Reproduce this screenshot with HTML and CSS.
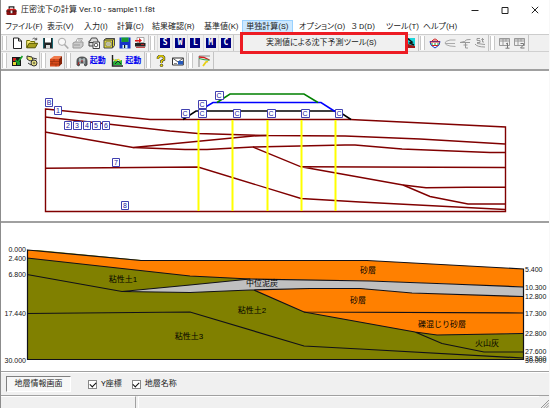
FILE: index.html
```html
<!DOCTYPE html>
<html lang="ja">
<head>
<meta charset="utf-8">
<title>圧密沈下の計算 Ver.10 - sample11.f8t</title>
<link rel="stylesheet" href="styles.css">
</head>
<body>
<div class="window">
  <header class="titlebar">
    <svg class="app-icon" viewBox="0 0 12 12"><path d="M3.5 4V2h5v2" fill="none" stroke="#222" stroke-width="1.4"/><path d="M1 5l2-1h6l2 1v3H1z" fill="#d01818"/><path d="M.5 7h11v3l-1 1h-9l-1-1z" fill="#8c1010"/><path d="M0 6.5h12M4 8h4" stroke="#211" stroke-width="1.2"/><path d="M5 6h2v3H5z" fill="#eee"/></svg>
    <h1 class="title">圧密沈下の計算 Ver.10 - sample11.f8t</h1>
    <div class="window-buttons">
      <button aria-label="最小化"><svg viewBox="0 0 8 8"><path d="M.5 4.5h7" stroke="#222"/></svg></button>
      <button aria-label="最大化"><svg viewBox="0 0 8 8"><path d="M1 1.5h6v6H1z" fill="none" stroke="#222"/></svg></button>
      <button aria-label="閉じる"><svg viewBox="0 0 8 8"><path d="M.8.8l6.4 6.4M7.2.8L.8 7.2" stroke="#222"/></svg></button>
    </div>
  </header>

  <nav class="menubar">
    <button>ファイル(F)</button>
    <button>表示(V)</button>
    <button>入力(I)</button>
    <button>計算(C)</button>
    <button>結果確認(R)</button>
    <button>基準値(K)</button>
    <div class="menu-open">
      <button class="active">単独計算(S)</button>
      <div class="dropdown"><button>実測値による沈下予測ツール(S)</button></div>
    </div>
    <button>オプション(O)</button>
    <button>３ D(D)</button>
    <button>ツール(T)</button>
    <button>ヘルプ(H)</button>
  </nav>

  <div class="toolbars">
    <div class="toolbar">
      <i class="grip"></i>
      <div class="group files">
        <button aria-label="新規"><svg viewBox="0 0 12 12"><path d="M2.5 1h5l3 3v7.5h-8z" fill="#fff" stroke="#222"/><path d="M7.5 1v3h3" fill="none" stroke="#222"/></svg></button>
        <button aria-label="開く"><svg viewBox="0 0 12 12"><path d="M.7 10.5v-7h3l1 1h4v2" fill="#fff17a" stroke="#6c6c00"/><path d="M.7 10.8l2.3-4.5h8.7l-2.5 4.5z" fill="#a8a020" stroke="#555500"/><path d="M6.5 2c1.5-1.3 3-1 3.8.5M10.7.8v2H8.5" fill="none" stroke="#333" stroke-width=".8"/></svg></button>
        <button aria-label="保存"><svg viewBox="0 0 12 12"><path d="M1 1h10v10.5H1z" fill="#222"/><path d="M3 1h6v4.5H3z" fill="#fff"/><path d="M1.7 1v10M10.4 1v10" stroke="#168494" stroke-width=".8"/><path d="M4 8h4v3.5H4z" fill="#ddd"/></svg></button>
        <button aria-label="検索"><svg viewBox="0 0 12 12"><circle cx="5" cy="4.8" r="3.6" fill="#f8f8f8" stroke="#aaa"/><path d="M7.5 7.5l3.8 4" stroke="#aaa" stroke-width="1.6"/></svg></button>
        <button aria-label="印刷"><svg viewBox="0 0 12 12"><path d="M3.5 5.500l2-4h5L8.500 5.500" fill="#fff" stroke="#aaa"/><path d="M1 6l2-1h8v4L8.500 11H1z" fill="#ccc" stroke="#999"/><path d="M2 8h6M6 3h3" stroke="#999"/></svg></button>
        <button aria-label="印刷プレビュー"><svg viewBox="0 0 12 12"><path d="M2 4l1.500-3h5L10 4v5H1V4z" fill="#ddd" stroke="#444"/><path d="M1 5.500h9" stroke="#444"/><path d="M5 5h6.500v6.500H5z" fill="#fff" stroke="#444"/><circle cx="8" cy="8" r="1.800" fill="none" stroke="#555"/></svg></button>
        <button aria-label="図面"><svg viewBox="0 0 12 12"><path d="M1 3l2-1.500h8.500v7L9.500 11H1z" fill="#e4dc38" stroke="#444"/><path d="M1 3h8.500v8M9.500 3l2-1.500" fill="none" stroke="#444"/><path d="M3 5h5v4H3z" fill="#ffc" stroke="#555" stroke-width=".7"/><path d="M4 7h3" stroke="#777"/></svg></button>
        <button aria-label="FD保存"><svg viewBox="0 0 12 12"><path d="M.5.5h11v11H.5z" fill="#1735c8"/><path d="M2.5.5h7V5h-7z" fill="#2ed24a"/><path d="M3 2h6M3 4h6" stroke="#075f16"/><path d="M3.5 8h5v3.5h-5z" fill="#d0f4ff"/><path d="M5 8h1.2v3H5z" fill="#111"/></svg></button>
        <button aria-label="出力"><svg viewBox="0 0 12 12"><path d="M3 .5h7v5H3z" fill="#fff" stroke="#888" stroke-width=".7"/><path d="M1 3h4V1l3 2.500-3 2.500V4.500H1z" fill="#e01818"/><path d="M1 6h10.500v3.500H1z" fill="#222"/><path d="M2 10.300h9M7 7.500h3" stroke="#ba2222"/></svg></button>
      </div>
      <i class="grip"></i>
      <div class="group letters">
        <button><b>S</b></button><button><b>W</b></button><button><b>L</b></button><button><b>M</b></button><button><b>C</b></button>
      </div>
      <div class="group hidden-tools">
        <button aria-label="断面図"><svg viewBox="0 0 12 12"><path d="M1 1h10v10H1z" fill="#18d6dc"/><path d="M1 8l3-1 3 1 4 1v2H1z" fill="#a01818"/><path d="M3 1l5 4-2 1 4 2" fill="none" stroke="#111" stroke-width="1.6"/></svg></button>
      </div>
      <i class="grip"></i>
      <div class="group shapes">
        <button aria-label="土層"><svg viewBox="0 0 12 12"><path d="M3 4q3-4 6 0z" fill="#fff" stroke="#d02020"/><path d="M1 4.5h10L10 8l-4 3-4-3z" fill="#fff" stroke="#1b31c4"/><path d="M1 5h10M3 8.5h6" stroke="#d02020"/><path d="M2 7h8" stroke="#149b36" stroke-dasharray="2 1"/></svg></button>
        <button aria-label="曲線"><svg viewBox="0 0 12 12"><path d="M11.5 3H6Q1 4 1 6t5 3l5.5.5M1 6.5h10" fill="none" stroke="#aaa"/></svg></button>
        <button aria-label="時間曲線"><svg viewBox="0 0 12 12"><path d="M11.5 2.5Q7 2 5.5 4.5L1 5.5h10M6.5 6v5M4.5 8h4M6.5 11H9" fill="none" stroke="#999"/></svg></button>
        <button aria-label="沈下曲線"><svg viewBox="0 0 12 12"><path d="M6 1.5H3v2h3v2H3M8.5 1v4H10M7.3 2.5H10M1 7q2 3 10 3M3 6.5l8 1" fill="none" stroke="#999"/></svg></button>
      </div>
      <i class="grip"></i>
      <div class="group tables">
        <button aria-label="表1"><svg viewBox="0 0 12 12"><path d="M.5 1.5h10v7H.5zM.5 4h10M4 1.5v7M7 1.5v3" fill="none" stroke="#999"/><path d="M.5 1.5h10v1H.5z" fill="#999"/><path d="M7 7l1.5-1v5M6.5 11.2h4" fill="none" stroke="#777"/></svg></button>
        <button aria-label="表2"><svg viewBox="0 0 12 12"><path d="M.5 1.5h10v7H.5zM.5 4h10M4 1.5v7M7 1.5v3" fill="none" stroke="#999"/><path d="M.5 1.5h10v1H.5z" fill="#999"/><path d="M6.5 6.5h3V8l-3 3h4" fill="none" stroke="#777"/></svg></button>
      </div>
    </div>
    <div class="toolbar">
      <i class="grip"></i>
      <div class="group checks">
        <button aria-label="計算確認"><svg viewBox="0 0 12 12"><path d="M1 2h9v9H1z" fill="#181818"/><path d="M2 3h3v3H2z" fill="#d12020"/><path d="M6 7h3v3H6z" fill="#1d9a2d"/><path d="M2 7h3v3H2z" fill="#e6d533"/><path d="M4.5 5l2 2.5L11.5 1" fill="none" stroke="#18a12a" stroke-width="1.7"/></svg></button>
        <button aria-label="連動"><svg viewBox="0 0 12 12"><path d="M1 1l5 1 1 3-3 1-3-2z" fill="#e8e46a" stroke="#333"/><circle cx="8" cy="8" r="3" fill="#ddd67c" stroke="#333"/><path d="M2 8l3 2M7 3l4 1M7 8h2" stroke="#333"/></svg></button>
      </div>
      <i class="grip"></i>
      <div class="group single">
        <button aria-label="土質"><svg viewBox="0 0 12 12"><path d="M0 4l4-3h8L9 4z" fill="#ef7a4c"/><path d="M0 4h9v7.5H0z" fill="#d84a1c"/><path d="M9 4l3-3v7.5l-3 3z" fill="#842208"/><path d="M0 6.5h9l3-3M0 9h9l3-3M4 4v2.5M2 6.5V9M6 9v2.5" fill="none" stroke="#8e2b0c" stroke-width=".6"/></svg></button>
      </div>
      <i class="grip"></i>
      <div class="group launch">
        <button><svg viewBox="0 0 12 12"><path d="M1 10V6q0-4 5-4t5 4v4l-2 1-1-3H4l-1 3z" fill="#666d70" stroke="#333" stroke-width=".8"/><path d="M3 5h6M4 3v6M8 3v6" stroke="#c7d0d1"/><path d="M2 10l1-3M5 6h2" stroke="#a22"/></svg><span>起動</span></button>
        <button><svg viewBox="0 0 12 12"><path d="M2 7l3-3 2 2 4-1v5H2z" fill="#25b13a"/><path d="M2 4l3 2 2-2 3 2" fill="none" stroke="#e0cd10"/><path d="M4 9l3-3 3 3" fill="none" stroke="#222"/><path d="M1.500 0v11H12" fill="none" stroke="#222" stroke-width="1.400"/></svg><span>起動</span></button>
      </div>
      <i class="grip"></i>
      <div class="group help">
        <button aria-label="ヘルプ"><svg viewBox="0 0 12 12"><path d="M3 4V2.5L4.5 1h3L9 2.5v2L6.5 6v2" fill="none" stroke="#222" stroke-width="2.4"/><path d="M3 4V2.5L4.5 1h3L9 2.5v2L6.5 6v2" fill="none" stroke="#f3df00" stroke-width="1.3"/><circle cx="6.5" cy="10.4" r="1.3" fill="#f3df00" stroke="#222" stroke-width=".7"/></svg></button>
        <button aria-label="メール"><svg viewBox="0 0 12 12"><path d="M.5 3h10.8v7H.5z" fill="#fff" stroke="#333"/><path d="M.5 3L6 7l5.3-4" fill="none" stroke="#555"/><path d="M6 6h5v3.5H6z" fill="#2459bd"/><path d="M2 8.5h3" stroke="#888"/></svg></button>
      </div>
      <i class="grip"></i>
      <div class="group graph">
        <button aria-label="グラフ"><svg viewBox="0 0 12 12"><path d="M1 12V1h11" fill="none" stroke="#888"/><path d="M1 2l5 .5L11.5 5" fill="none" stroke="#d02020" stroke-width="1.3"/><path d="M1 3.5l5 1.2 5.5.5" fill="none" stroke="#26a53b"/><path d="M5 11l3-4 2-.5" fill="none" stroke="#e8cf14" stroke-width="1.8"/></svg></button>
      </div>
    </div>
  </div>

  <main class="views">
    <section class="view">
      <svg class="plot" viewBox="1 71 548 150" role="img" aria-label="断面図">
        <g class="strata">
          <path d="M45.500 109L150 119.500H350L505.500 127V211.500H45.500Z"/>
          <path d="M45 117L170 131L198 133.500L267 135.500L345 136L420 139L505 144"/>
          <path d="M45 132L133 147.500L185 149.500H207L253 147L345 145H355L402 149L490 152.500H505"/>
          <path d="M133 147.500L170 144L253 136L267 135.500"/>
          <path d="M45 168.300L198 167L301 198.500L360 202L505 209.500"/>
          <path d="M253 147L301 166.800L505 167.500M301 166.800L350 175.500L403 185L426 187.800L467 187.300H505"/>
          <path d="M403 185L430 196.500L468 204H505"/>
        </g>
        <g class="yellow"><path d="M198.500 120V211M232.500 120V211M267.500 120V211M301.500 120V211M335.500 120V211"/></g>
        <path class="bank" stroke="#000" d="M183 119.500L196 111H338L351 119.500"/>
        <path class="bank" stroke="#00f" d="M198 111.500L213 102.500H321L335 111.500"/>
        <path class="bank" stroke="#008000" d="M217 102.500L230 94H304L318 102.500"/>
        <g class="tag-boxes">
          <path d="M45.500 98.500h7v8h-7zM54.500 106.500h7v8h-7zM64.500 121.500h7v8h-7zM73.500 121.500h8v8h-8zM83.500 121.500h7v8h-7zM92.500 121.500h8v8h-8zM102.500 121.500h7v8h-7zM112.500 158.500h7v8h-7zM121.500 201.500h7v8h-7z"/>
          <path d="M181.500 109.500h8v8h-8zM198.500 109.500h8v8h-8zM198.500 100.500h8v8h-8zM215.500 91.500h8v8h-8zM233.500 109.500h7v8h-7zM267.500 109.500h8v8h-8zM301.500 109.500h8v8h-8zM335.500 109.500h7v8h-7z"/>
        </g>
        <g class="tags">
          <text x="49" y="105">B</text><text x="58" y="113">1</text>
          <text x="68" y="128">2</text><text x="77" y="128">3</text><text x="87" y="128">4</text><text x="96" y="128">5</text><text x="106" y="128">6</text>
          <text x="116" y="165">7</text><text x="125" y="208">8</text>
          <text x="185" y="116">C</text><text x="202" y="116">C</text><text x="202" y="107">C</text><text x="219" y="98">C</text>
          <text x="237" y="116">C</text><text x="271" y="116">C</text><text x="305" y="116">C</text><text x="339" y="116">C</text>
        </g>
      </svg>
    </section>
    <section class="view">
      <svg class="plot" viewBox="1 223 548 148" role="img" aria-label="地層図">
        <path fill="#808000" d="M27 250H250L523 340V360H27Z"/>
        <path fill="#ff8000" d="M27 250L141 260.500H367L523 269V287L450 284L370 281L252 279L190 276L27 258Z"/>
        <path fill="#fff" d="M27 249L141 260H367L523 268V249Z"/>
        <path fill="#c0c0c0" d="M122 291.500L190 285L250 279L370 281L450 284L523 287V296.500L412 293L360 288.500H310L250 290L190 292.500Z"/>
        <path fill="#ff8000" d="M254 290L310 288.500H360L412 293L523 296.500V333.500L437 335L415 332L304 312Z"/>
        <path fill="#808000" d="M415 332L437 335L523 333.500V360H304Z"/>
        <g class="outline">
          <path d="M27.500 250L141 260.500H367L523.500 269V359.500H27.500Z"/>
          <path d="M27 258L190 276L250 279L370 281L450 284L523 287"/>
          <path d="M27 274.500L122 291.500L190 292.500L250 290L310 288.500H360L412 293L523 296.500M122 291.500L190 285L250 279"/>
          <path d="M27 313.500L190 312L304 346L360 349L523 358M254 290L304 312L523 313"/>
          <path d="M304 312L415 332L437 335L523 333.500M415 332L442 343.500L484 352H523"/>
        </g>
        <g class="depth left">
          <text x="26" y="252">0.000</text><text x="26" y="261">2.400</text><text x="26" y="277">6.800</text><text x="26" y="316">17.440</text><text x="26" y="363">30.000</text>
        </g>
        <g class="depth">
          <text x="525" y="272">5.400</text><text x="525" y="290">10.300</text><text x="525" y="299">12.800</text><text x="525" y="316">17.300</text><text x="525" y="336">22.800</text><text x="525" y="354">27.600</text><text x="525" y="361">28.500</text><text x="525" y="363">30.000</text>
        </g>
        <g class="names">
          <text x="123" y="282">粘性土1</text><text x="262" y="286">中位泥炭</text><text x="368" y="273">砂層</text><text x="358" y="303">砂層</text>
          <text x="252" y="313">粘性土2</text><text x="189" y="339">粘性土3</text><text x="442" y="327">礫混じり砂層</text><text x="487" y="346">火山灰</text>
        </g>
      </svg>
    </section>
  </main>

  <div class="options">
    <button class="info-button">地層情報画面</button>
    <label><input type="checkbox" checked>Y座標</label>
    <label><input type="checkbox" checked>地層名称</label>
  </div>
  <footer class="statusbar">
    <div class="pane first"></div>
    <div class="pane"></div>
    <svg class="size-grip" viewBox="0 0 9 9"><path d="M0 9L9 0M3 9l6-6M6 9l3-3" stroke="#888"/></svg>
  </footer>
</div>
</body>
</html>
```
FILE: styles.css
```css
* { box-sizing: border-box; }
body {
  margin: 0;
  background: #f0f0f0;
  color: #222;
  font: 8px/12px Roboto, "Noto Sans CJK JP", sans-serif;
}
button {
  margin: 0;
  padding: 0;
  border: 0;
  background: none;
  color: inherit;
  font: inherit;
  white-space: nowrap;
}
svg { display: block; }
.window {
  display: flex;
  flex-direction: column;
  min-height: 100vh;
  border-left: 1px solid #8c8c8c;
  border-right: 1px solid #f8f8f8;
}

.titlebar {
  display: flex;
  align-items: center;
  height: 20px;
  padding-left: 5px;
  background: #fff;
}
.app-icon { width: 11px; height: 11px; }
.title {
  margin: 0 0 0 4px;
  font-size: 8px;
  font-weight: 400;
  flex: 1;
}
.window-buttons { display: flex; gap: 22px; padding-right: 10px; }
.window-buttons svg { width: 8px; height: 8px; }

.menubar {
  display: grid;
  grid-template-columns: 42px 37px 33px 35px 52px 41px 54px 52px 35px 37px 40px;
  height: 14px;
  padding-left: 4px;
  background: #fff;
  font-feature-settings: "palt";
}
.menubar button { text-align: left; }
.menu-open { position: relative; margin-left: -3px; }
.menu-open .active {
  width: 51px;
  height: 13px;
  border: 1px solid #99d1ff;
  background: #cce8ff;
  text-align: center;
}
.dropdown {
  position: absolute;
  z-index: 2;
  top: 12px;
  left: -2px;
  width: 168px;
  height: 22px;
  padding-left: 23px;
  border: 3px solid #ed1c24;
  background: #f0f0f0;
}
.dropdown button { height: 16px; }

.toolbars { border-top: 1px solid #ccc; border-bottom: 2px solid #a0a0a0; }
.toolbar { display: flex; height: 17px; border-bottom: 1px solid #d0d0d0; }
.toolbar + .toolbar { border-bottom: 0; }
.grip {
  width: 5px;
  margin: 1px 2px 1px 1px;
  border: solid #c8c8c8;
  border-width: 0 1px;
  background: #fff;
}
.group {
  display: grid;
  grid-auto-flow: column;
  grid-auto-columns: 1fr;
  border-right: 1px solid #c4c4c4;
}
.group button { display: flex; align-items: center; justify-content: center; }
.group svg { width: 12px; height: 12px; }
.files { width: 140px; }
.letters { width: 77px; }
.letters button { border-left: 1px solid #ddd; }
.letters b {
  width: 10px;
  height: 10px;
  background: #000080;
  color: #fff;
  font: bold 8px/10px "DejaVu Sans Mono", monospace;
  text-align: center;
}
.hidden-tools { width: 185px; justify-content: end; grid-auto-columns: 16px; }
.shapes { width: 62px; }
.tables { width: 32px; }
.checks { width: 31px; }
.single { width: 17px; }
.launch { width: 72px; }
.launch button { gap: 2px; }
.launch span { color: #0000f0; font-weight: 700; }
.help { width: 34px; }
.graph { width: 19px; }

.views { flex: 1; background: #fff; }
.view { border-bottom: 2px solid #a0a0a0; }
.view + .view { border-bottom-width: 1px; }
.plot { width: 100%; height: auto; }
.strata path, .bank, .yellow path, .outline path { fill: none; }
.strata path { stroke: #800000; stroke-width: 1.400px; }
.bank { stroke-width: 1.500px; }
.yellow path { stroke: #ff0; stroke-width: 2px; }
.outline path { stroke: #101018; stroke-width: 1.200px; }
.tag-boxes path { fill: #fff; stroke: #4040b0; }
.tags text {
  fill: #1818a0;
  font: 7px "Liberation Sans", sans-serif;
  text-anchor: middle;
}
.depth text { fill: #111; font: 7px "Liberation Sans", sans-serif; }
.left text { text-anchor: end; }
.names text {
  fill: #000;
  font: 8px "Liberation Sans", "Noto Sans CJK JP", sans-serif;
  text-anchor: middle;
}

.options {
  display: flex;
  align-items: center;
  height: 23px;
  padding-left: 5px;
  border-top: 1px solid #fff;
}
.info-button {
  width: 65px;
  height: 16px;
  margin-right: 17px;
  border: 1px solid;
  border-color: #808080 #fff #fff #808080;
  background: #f7f7f7;
}
.options label { display: flex; align-items: center; gap: 4px; margin-right: 10px; }
.options input {
  appearance: none;
  width: 9px;
  height: 9px;
  margin: 0;
  border: 1px solid #888;
  background: #fff;
  display: grid;
  place-items: center;
}
.options input:checked::before {
  content: "";
  width: 5px;
  height: 3px;
  border: solid #111;
  border-width: 0 0 1px 1px;
  transform: rotate(-45deg);
}
.statusbar {
  display: flex;
  gap: 2px;
  height: 13px;
  border-top: 1px solid #a0a0a0;
}
.pane { flex: 1; border-top: 1px solid #fff; border-left: 1px solid #fff; }
.first { flex: 0 0 135px; border-left: 0; border-right: 1px solid #a0a0a0; }
.size-grip { width: 8px; height: 8px; align-self: end; }
```
